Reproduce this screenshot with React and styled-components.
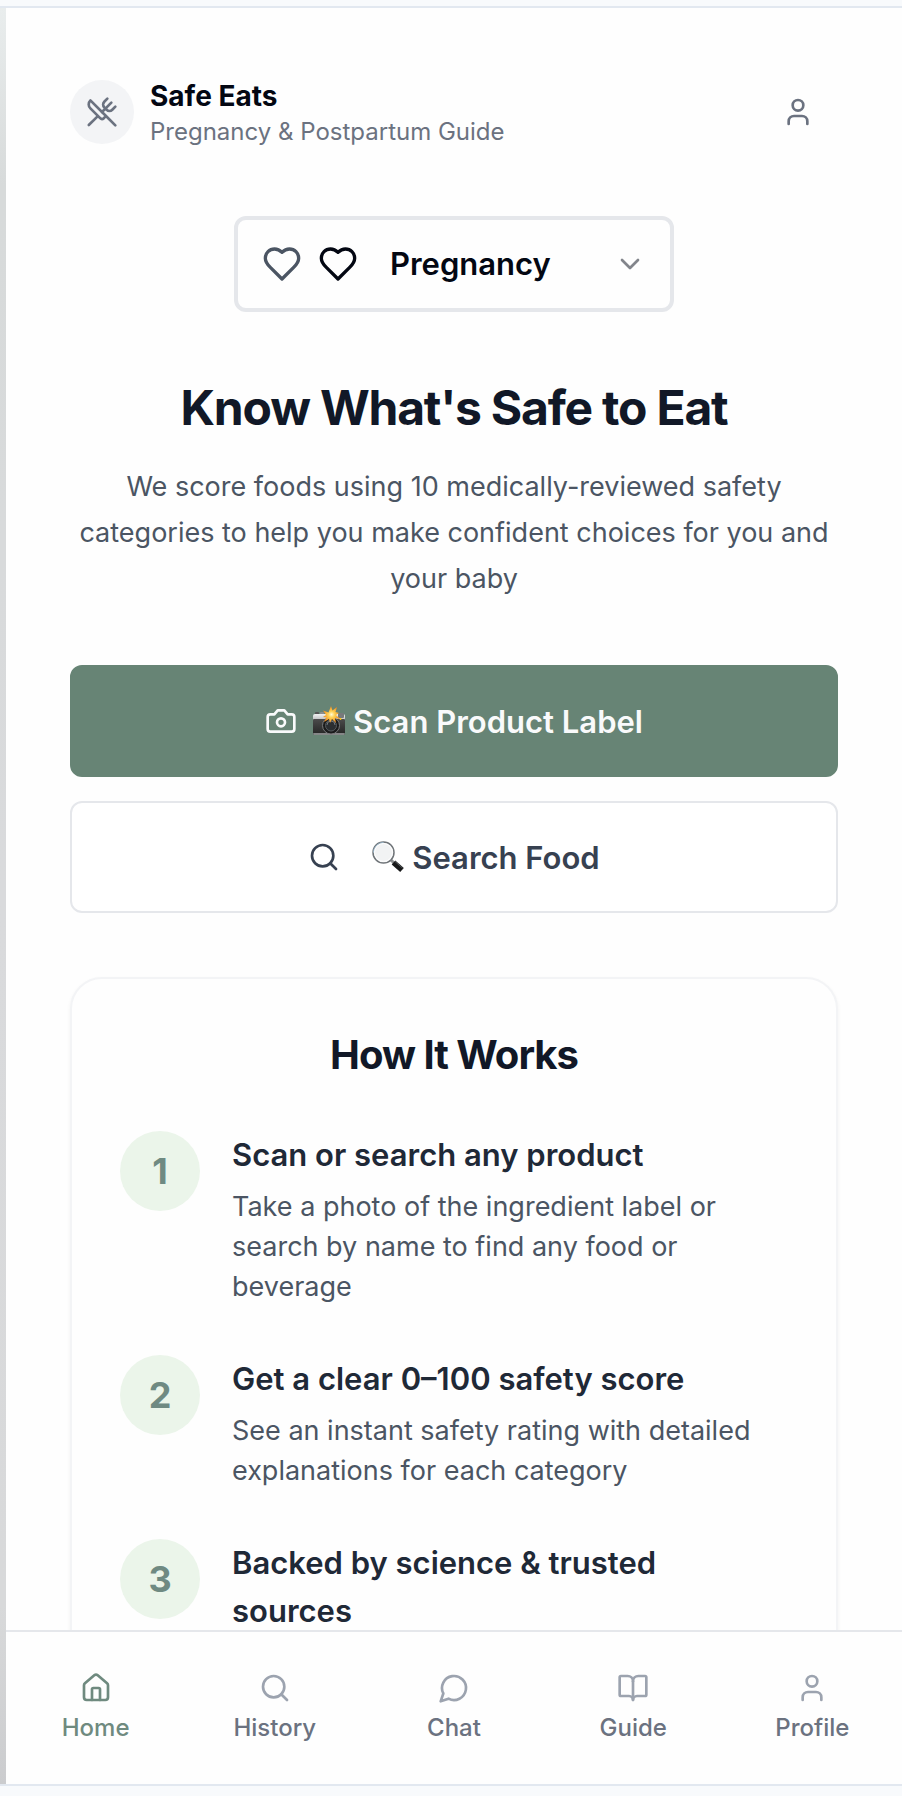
import React from 'react';
import styled, { createGlobalStyle } from 'styled-components';
import { ChevronDown, Search, User, UtensilsCrossed } from 'lucide-react';

const steps = [
  {
    title: 'Scan or search any product',
    text: 'Take a photo of the ingredient label or search by name to find any food or beverage',
  },
  {
    title: 'Get a clear 0–100 safety score',
    text: 'See an instant safety rating with detailed explanations for each category',
  },
  {
    title: 'Backed by science & trusted sources',
  },
];

const tabs = [
  { label: 'Home', icon: HomeIcon, active: true },
  { label: 'History', icon: Search },
  { label: 'Chat', icon: ChatIcon },
  { label: 'Guide', icon: BookIcon },
  { label: 'Profile', icon: User },
];

function Icon({ size = 32, children }) {
  return (
    <svg
      width={size}
      height={size}
      viewBox='0 0 24 24'
      fill='none'
      stroke='currentColor'
      strokeWidth='2'
      strokeLinecap='round'
      strokeLinejoin='round'
      aria-hidden='true'
    >
      {children}
    </svg>
  );
}

function HeartIcon() {
  return (
    <Icon size={40}>
      <path d='M19 14c1.49-1.46 3-3.21 3-5.5A5.5 5.5 0 0 0 16.5 3c-1.76 0-3 .5-4.5 2-1.5-1.5-2.74-2-4.5-2A5.5 5.5 0 0 0 2 8.5c0 2.3 1.5 4.05 3 5.5l7 7Z' />
    </Icon>
  );
}

function HomeIcon() {
  return (
    <Icon>
      <path d='M15 21v-8a1 1 0 0 0-1-1h-4a1 1 0 0 0-1 1v8' />
      <path d='M3 10a2 2 0 0 1 .709-1.528l7-5.999a2 2 0 0 1 2.582 0l7 5.999A2 2 0 0 1 21 10v9a2 2 0 0 1-2 2H5a2 2 0 0 1-2-2z' />
    </Icon>
  );
}

function CameraIcon() {
  return (
    <Icon>
      <path d='M14.5 4h-5L7 7H4a2 2 0 0 0-2 2v9a2 2 0 0 0 2 2h16a2 2 0 0 0 2-2V9a2 2 0 0 0-2-2h-3l-2.5-3z' />
      <circle cx='12' cy='13' r='3' />
    </Icon>
  );
}

function ChatIcon() {
  return (
    <Icon>
      <path d='M7.9 20A9 9 0 1 0 4 16.1L2 22Z' />
    </Icon>
  );
}

function BookIcon() {
  return (
    <Icon>
      <path d='M12 7v14' />
      <path d='M3 18a1 1 0 0 1-1-1V4a1 1 0 0 1 1-1h5a4 4 0 0 1 4 4 4 4 0 0 1 4-4h5a1 1 0 0 1 1 1v13a1 1 0 0 1-1 1h-6a3 3 0 0 0-3 3 3 3 0 0 0-3-3z' />
    </Icon>
  );
}

function CameraFlash() {
  return (
    <svg width='32' height='32' viewBox='0 -2 32 32' role='img' aria-label='📸'>
      <defs>
        <linearGradient id='cam-top' x1='0' y1='0' x2='0' y2='1'>
          <stop offset='0' stopColor='#f1f2f2' />
          <stop offset='1' stopColor='#a9abac' />
        </linearGradient>
        <linearGradient id='cam-body' x1='0' y1='0' x2='0' y2='1'>
          <stop offset='0' stopColor='#4b4b4b' />
          <stop offset='1' stopColor='#242424' />
        </linearGradient>
        <radialGradient id='cam-flash'>
          <stop offset='0' stopColor='#fffbd8' />
          <stop offset='0.35' stopColor='#ffd45a' />
          <stop offset='1' stopColor='#f08a17' />
        </radialGradient>
      </defs>
      <rect x='2' y='5' width='4' height='3' rx='1' fill='#555' />
      <rect x='7' y='5' width='4' height='3' rx='1' fill='#8b8d8e' />
      <rect x='0' y='7' width='32' height='8' rx='2' fill='url(#cam-top)' />
      <rect x='25' y='6' width='6' height='5' rx='1' fill='#777a7b' />
      <rect x='0' y='12' width='32' height='16' rx='1' fill='url(#cam-body)' />
      <rect x='0' y='26' width='32' height='2' rx='1' fill='#858788' />
      <circle cx='18' cy='18.5' r='8.5' fill='#1b1b1c' stroke='#77797a' />
      <circle cx='18' cy='18.5' r='5.5' fill='#2b2e31' stroke='#555a5d' />
      <path d='M14 18a4 4 0 0 1 8 0' fill='none' stroke='#70777c' />
      <circle cx='27.5' cy='12' r='1' fill='#ffc400' />
      <path
        d='M18 -1l1.500 4.500L24 0l-1.500 5 3.500 1-3 2 4 4-5-1 1 5-4-4-2 4-1-4-5 3 2.500-4.500-3.500-.500 3-2-3-4.500 5.500 2z'
        fill='url(#cam-flash)'
      />
    </svg>
  );
}

function MagnifyingGlass() {
  return (
    <svg width='32' height='32' viewBox='0 0 32 32' role='img' aria-label='🔍'>
      <path d='m18 18 5 5' stroke='#8c8f91' strokeWidth='3' />
      <path d='m21.500 21.500 8.500 7.500' stroke='#171819' strokeWidth='5.5' />
      <path d='m23 20.500 7.500 6.500' stroke='#55585b' strokeWidth='1' />
      <circle cx='11.5' cy='11.5' r='10.5' fill='#f2f3f4' stroke='#707579' strokeWidth='1.5' />
      <path d='M1.500 11.500a10 10 0 0 1 10-10' fill='none' stroke='#9dbbd0' />
      <circle cx='11.5' cy='11.5' r='9' fill='none' stroke='#fff' strokeWidth='1' />
    </svg>
  );
}

function Step({ number, title, text }) {
  return (
    <StepRow>
      <StepNumber>{number}</StepNumber>
      <StepBody>
        <StepTitle>{title}</StepTitle>
        {text && <StepText>{text}</StepText>}
      </StepBody>
    </StepRow>
  );
}

export default function App() {
  return (
    <>
      <GlobalStyle />
      <Frame>
        <Edge />
        <Screen>
          <Content>
            <Header>
              <Logo>
                <UtensilsCrossed size={32} />
              </Logo>
              <Brand>
                <BrandName>Safe Eats</BrandName>
                <Tagline>Pregnancy &amp; Postpartum Guide</Tagline>
              </Brand>
              <AccountButton aria-label='Account'>
                <User size={32} />
              </AccountButton>
            </Header>

            <StagePicker>
              <MutedHeart>
                <HeartIcon />
              </MutedHeart>
              <HeartIcon />
              <StageSelect aria-label='Stage' defaultValue='Pregnancy'>
                <option>Pregnancy</option>
                <option>Postpartum</option>
              </StageSelect>
              <PickerArrow size={32} />
            </StagePicker>

            <Hero>
              <HeroTitle>Know What's Safe to Eat</HeroTitle>
              <HeroText>
                We score foods using 10 medically-reviewed safety categories to
                help you make confident choices for you and your baby
              </HeroText>
            </Hero>

            <Actions>
              <ActionButton $primary>
                <CameraIcon />
                <ActionLabel>
                  <CameraFlash />
                  Scan Product Label
                </ActionLabel>
              </ActionButton>
              <ActionButton>
                <Search size={32} />
                <ActionLabel>
                  <MagnifyingGlass />
                  Search Food
                </ActionLabel>
              </ActionButton>
            </Actions>

            <Card>
              <CardTitle>How It Works</CardTitle>
              <StepList>
                {steps.map((step, i) => (
                  <Step key={step.title} number={i + 1} {...step} />
                ))}
              </StepList>
            </Card>
          </Content>

          <TabBar>
            {tabs.map(({ label, icon: TabIcon, active }) => (
              <Tab key={label} href={`#${label.toLowerCase()}`} $active={active}>
                <TabIcon size={32} />
                <TabLabel $active={active}>{label}</TabLabel>
              </Tab>
            ))}
          </TabBar>
        </Screen>
      </Frame>
    </>
  );
}

const GlobalStyle = createGlobalStyle`
  * {
    box-sizing: border-box;
  }

  body {
    margin: 0;
    background: #f8fafc;
    color: #030712;
    font-family: Inter, 'Liberation Sans', sans-serif;
  }

  h1, h2, h3, p, ol {
    margin: 0;
    padding: 0;
  }

  button, select {
    font: inherit;
    color: inherit;
    cursor: pointer;
  }

  svg {
    display: block;
    flex-shrink: 0;
  }
`;

const Frame = styled.div`
  display: flex;
  height: 100vh;
  padding: 6px 0 10px;
`;

const Edge = styled.div`
  width: 6px;
  border-top: 2px solid #e2e8f0;
  border-bottom: 2px solid #e2e8f0;
  background: linear-gradient(#e9eded, #d7dada 10%, #d9dadc 50%, #d8d9da 90%, #cbccce);
`;

const Screen = styled.div`
  display: flex;
  flex: 1;
  flex-direction: column;
  min-width: 0;
  border-top: 2px solid #e2e8f0;
  border-bottom: 2px solid #e2e8f0;
  background: #fefefe;
`;

const Content = styled.main`
  flex: 1;
  min-height: 0;
  padding: 64px;
  overflow-y: auto;
  scrollbar-width: none;
`;

const Header = styled.header`
  display: flex;
  align-items: center;
  gap: 16px;
`;

const Logo = styled.div`
  display: flex;
  align-items: center;
  justify-content: center;
  width: 64px;
  height: 64px;
  border-radius: 50%;
  background: #f3f4f6;
  color: #6b7280;
`;

const Brand = styled.div`
  flex: 1;
`;

const BrandName = styled.p`
  font-size: 28px;
  font-weight: 700;
  line-height: 40px;
`;

const Tagline = styled.p`
  color: #6b7280;
  font-size: 24px;
  line-height: 32px;
`;

const AccountButton = styled.button`
  display: flex;
  align-items: center;
  justify-content: center;
  width: 80px;
  height: 80px;
  border: 0;
  border-radius: 12px;
  background: none;
  color: #6b7280;
`;

const StagePicker = styled.div`
  display: flex;
  align-items: center;
  gap: 16px;
  width: 440px;
  max-width: 100%;
  height: 96px;
  margin: 64px auto 0;
  padding: 0 24px;
  border: 4px solid #e5e7eb;
  border-radius: 12px;
`;

const MutedHeart = styled.span`
  color: #4b5563;
`;

const StageSelect = styled.select`
  flex: 1;
  min-width: 0;
  padding: 0 16px;
  border: 0;
  background: none;
  appearance: none;
  font-size: 31px;
  font-weight: 600;
  line-height: 48px;
`;

const PickerArrow = styled(ChevronDown)`
  color: #82858b;
  pointer-events: none;
`;

const Hero = styled.section`
  margin: 64px 0 63px;
  text-align: center;
`;

const HeroTitle = styled.h1`
  color: #111827;
  font-size: 48px;
  font-weight: 700;
  line-height: 64px;
  letter-spacing: -0.025em;
`;

const HeroText = styled.p`
  margin-top: 24px;
  color: #4b5563;
  font-size: 27px;
  line-height: 46px;
`;

const Actions = styled.div`
  display: flex;
  flex-direction: column;
  gap: 24px;
`;

const ActionButton = styled.button`
  display: flex;
  align-items: center;
  justify-content: center;
  gap: ${(props) => (props.$primary ? '16px' : '32px')};
  height: 112px;
  border: 2px solid ${(props) => (props.$primary ? '#678475' : '#e5e7eb')};
  border-radius: 12px;
  background: ${(props) => (props.$primary ? '#678475' : '#fff')};
  color: ${(props) => (props.$primary ? '#f9fafb' : '#374151')};
  font-size: 31px;
  font-weight: 600;
`;

const ActionLabel = styled.span`
  display: flex;
  align-items: center;
  gap: 8px;
`;

const Card = styled.section`
  margin-top: 64px;
  padding: 48px;
  border: 2px solid #f3f4f6;
  border-radius: 32px;
  background: #fefefe;
  box-shadow: 0 2px 4px rgba(0, 0, 0, 0.05);
`;

const CardTitle = styled.h2`
  margin-bottom: 48px;
  color: #111827;
  font-size: 40px;
  font-weight: 700;
  line-height: 56px;
  letter-spacing: -0.025em;
  text-align: center;
`;

const StepList = styled.ol`
  display: grid;
  gap: 48px;
  list-style: none;
`;

const StepRow = styled.li`
  display: flex;
  gap: 32px;
`;

const StepNumber = styled.span`
  display: flex;
  flex-shrink: 0;
  align-items: center;
  justify-content: center;
  width: 80px;
  height: 80px;
  border-radius: 50%;
  background: #ebf5ea;
  color: #6f8a82;
  font-size: 36px;
  font-weight: 700;
`;

const StepBody = styled.div`
  flex: 1;
  padding-right: 16px;
`;

const StepTitle = styled.h3`
  color: #1f2937;
  font-size: 31px;
  font-weight: 600;
  line-height: 48px;
`;

const StepText = styled.p`
  margin-top: 8px;
  color: #4b5563;
  font-size: 27px;
  line-height: 40px;
`;

const TabBar = styled.nav`
  display: grid;
  grid-template-columns: repeat(5, 1fr);
  padding: 40px 0;
  border-top: 2px solid #e5e7eb;
`;

const Tab = styled.a`
  display: flex;
  flex-direction: column;
  align-items: center;
  gap: 8px;
  color: ${(props) => (props.$active ? '#6f8a7f' : '#9ca3af')};
  text-decoration: none;
`;

const TabLabel = styled.span`
  color: ${(props) => (props.$active ? '#6f8a7f' : '#6b7280')};
  font-size: 24px;
  font-weight: 500;
  line-height: 32px;
`;
